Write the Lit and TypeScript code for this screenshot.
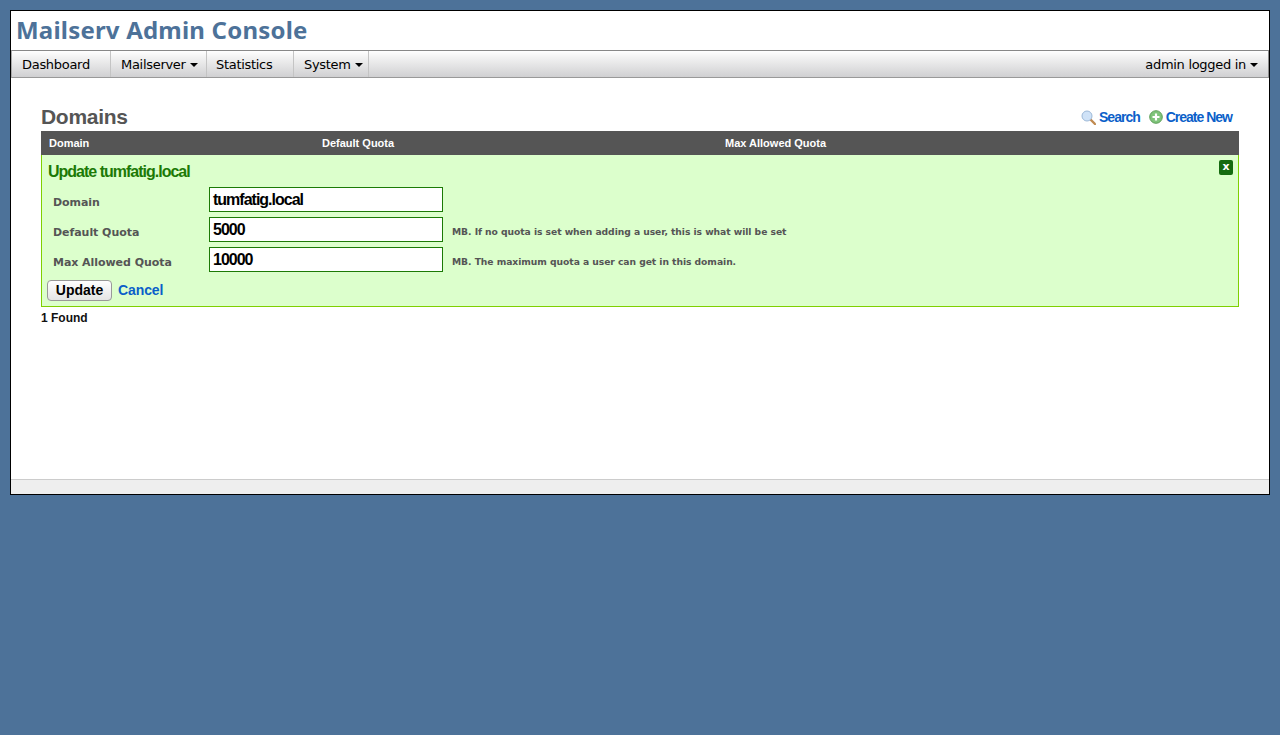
import { LitElement, html, css } from "lit";
import { customElement } from "lit/decorators.js";

const caret = html`<svg class="caret" width="8" height="4" viewBox="0 0 8 4"><path d="M0 0h8L4 4z" fill="#000"/></svg>`;

@customElement("app-root")
export class AppRoot extends LitElement {
  static styles = css`
    :host { display: block; height: 735px; background: #4d7299; padding: 10px 10px 0; box-sizing: border-box; font-family: "Liberation Sans", Arial, sans-serif; }
    .shell { border: 1px solid #000; background: #fff; height: 485px; box-sizing: border-box; display: flex; flex-direction: column; }
    .title { height: 39px; box-sizing: border-box; padding: 4px 0 0 5px; font: bold 24px/30px "Noto Sans", sans-serif; letter-spacing: 0.2px; color: #4d7299; white-space: nowrap; }
    .nav { height: 28px; box-sizing: border-box; border: 1px solid #8c8c8c; border-top-color: #888; border-bottom-color: #999; border-left-color: #aaa; display: flex; background: linear-gradient(#fff, #f2f2f2 25%, #d0d0d2); font: 13px/24px "DejaVu Sans", sans-serif; letter-spacing: -0.3px; color: #000; }
    .nav a { box-sizing: border-box; padding: 2px 0 0 10px; border-right: 1px solid #c4c4c4; display: flex; align-items: center; gap: 4px; white-space: nowrap; }
    .nav .user { margin-left: auto; border: 0; padding: 2px 10px 0 0; }
    .n1 { width: 99px; } .n2 { width: 96px; } .nav .n3 { width: 87px; padding-left: 9px; } .n4 { width: 75px; }
    .caret { margin-top: -1px; }
    .content { flex: 1; padding: 26px 30px 0; }
    .head { display: flex; justify-content: space-between; align-items: flex-end; height: 27px; }
    h1 { margin: 0 0 1px; font: bold 21px/26px "Liberation Sans", sans-serif; letter-spacing: -0.3px; color: #555; }
    .actions { display: flex; gap: 9px; padding: 0 7px 6px 0; font: bold 14px/16px "Liberation Sans", sans-serif; letter-spacing: -1px; color: #0b5fc9; }
    .actions span { display: flex; align-items: center; gap: 3px; }
    .thead { height: 24px; background: #555; color: #fff; display: grid; grid-template-columns: 273px 403px 1fr; padding-left: 8px; font: bold 11px/24px "Liberation Sans", sans-serif; }
    .panel { position: relative; background: #dcffcc; border: 1px solid #7fd000; border-top: 0; height: 152px; box-sizing: border-box; padding: 7px 6px 0 6px; }
    h2 { margin: 0; font: bold 16px/20px "Liberation Sans", sans-serif; letter-spacing: -1px; color: #1c7a06; }
    .close { position: absolute; right: 5px; top: 5px; width: 14px; height: 15px; background: #156b10; border-radius: 2px; color: #fff; font: bold 11px/14px "DejaVu Sans", sans-serif; text-align: center; }
    .rows { display: flex; flex-direction: column; gap: 5px; margin-top: 5px; }
    .row { display: grid; grid-template-columns: 161px 234px 1fr; align-items: center; height: 25px; }
    label { padding-left: 5px; padding-top: 6px; font: bold 11px/14px "DejaVu Sans", sans-serif; letter-spacing: -0.05px; color: #555; }
    .input { height: 25px; box-sizing: border-box; border: 1px solid #1c7a06; background: #fff; padding-left: 3px; font: bold 16px/23px "Liberation Sans", sans-serif; letter-spacing: -1px; color: #000; }
    .hint { padding-left: 9px; padding-top: 4px; font: bold 9.2px/14px "DejaVu Sans", sans-serif; letter-spacing: -0.05px; color: #555; white-space: nowrap; }
    .btns { display: flex; align-items: center; gap: 6px; margin: 8px 0 0 -1px; }
    .btn { width: 65px; height: 21px; box-sizing: border-box; border: 1px solid #999; border-radius: 4px; background: linear-gradient(#fff, #e4e4e4); text-align: center; font: bold 14px/19px "Liberation Sans", sans-serif; color: #000; }
    .cancel { font: bold 14px/19px "Liberation Sans", sans-serif; letter-spacing: -0.1px; color: #0b5fc9; }
    .found { margin-top: 4px; font: bold 12px/14px "Liberation Sans", sans-serif; color: #111; }
    .foot { height: 15px; box-sizing: border-box; background: #eee; border-top: 1px solid #ccc; }
  `;

  render() {
    return html`<div class="shell">
      <div class="title">Mailserv Admin Console</div>
      <div class="nav">
        <a class="n1">Dashboard</a>
        <a class="n2">Mailserver ${caret}</a>
        <a class="n3">Statistics</a>
        <a class="n4">System ${caret}</a>
        <a class="user">admin logged in ${caret}</a>
      </div>
      <div class="content">
        <div class="head">
          <h1>Domains</h1>
          <div class="actions">
            <span><svg width="15" height="15" viewBox="0 0 15 15"><path d="M9 9l5 5" stroke="#c08a50" stroke-width="2.4" stroke-linecap="round"/><circle cx="6" cy="6" r="5" fill="#cfe2f7" stroke="#9db9d8"/></svg>Search</span>
            <span><svg width="14" height="14" viewBox="0 0 14 14"><circle cx="7" cy="7" r="6.3" fill="#7fc47a" stroke="#5f9f5a"/><path d="M7 3.5v7M3.5 7h7" stroke="#fff" stroke-width="2.2"/></svg>Create New</span>
          </div>
        </div>
        <div class="thead"><div>Domain</div><div>Default Quota</div><div>Max Allowed Quota</div></div>
        <div class="panel">
          <div class="close">x</div>
          <h2>Update tumfatig.local</h2>
          <div class="rows">
            <div class="row"><label>Domain</label><div class="input">tumfatig.local</div></div>
            <div class="row"><label>Default Quota</label><div class="input">5000</div><div class="hint">MB. If no quota is set when adding a user, this is what will be set</div></div>
            <div class="row"><label>Max Allowed Quota</label><div class="input">10000</div><div class="hint">MB. The maximum quota a user can get in this domain.</div></div>
          </div>
          <div class="btns"><div class="btn">Update</div><div class="cancel">Cancel</div></div>
        </div>
        <div class="found">1 Found</div>
      </div>
      <div class="foot"></div>
    </div>`;
  }
}
